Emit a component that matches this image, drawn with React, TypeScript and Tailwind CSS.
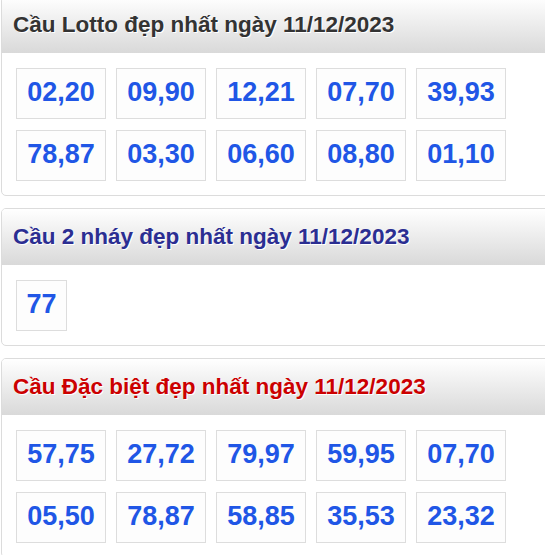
import React from "react";

const panels = [
  {
    title: "Cầu Lotto đẹp nhất ngày 11/12/2023",
    color: "text-[#333333]",
    items: ["02,20", "09,90", "12,21", "07,70", "39,93", "78,87", "03,30", "06,60", "08,80", "01,10"],
    wide: true,
  },
  {
    title: "Cầu 2 nháy đẹp nhất ngày 11/12/2023",
    color: "text-[#2b2e92]",
    items: ["77"],
    wide: false,
  },
  {
    title: "Cầu Đặc biệt đẹp nhất ngày 11/12/2023",
    color: "text-[#cc0000]",
    items: ["57,75", "27,72", "79,97", "59,95", "07,70", "05,50", "78,87", "58,85", "35,53", "23,32"],
    wide: true,
  },
];

export default function App() {
  return (
    <div className="w-[545px] h-[555px] overflow-hidden bg-white font-['Liberation_Sans',Arial,sans-serif]">
      <div className="w-[580px] pl-px -mt-1 flex flex-col gap-[12px]">
        {panels.map((p, i) => (
          <div key={i} className="border border-[#dcdcdc] rounded-[5px] overflow-hidden bg-white">
            <div className="h-[56px] flex items-center pl-[11px] bg-gradient-to-b from-[#ffffff] to-[#d9d9d9]">
              <span className={`text-[22.5px] font-bold leading-none ${p.color} [text-shadow:1px_1px_0_#ffffff]`}>
                {p.title}
              </span>
            </div>
            <div className="pl-[14px] pt-[15px] pb-[14px] flex flex-wrap w-[520px] gap-x-[10px] gap-y-[11px]">
              {p.items.map((n, j) => (
                <div
                  key={j}
                  className={`${p.wide ? "w-[90px]" : "w-[51px]"} h-[51px] pb-[2px] border border-[#dddddd] bg-[#fdfdfd] flex items-center justify-center text-[27px] font-bold text-[#2056e6] leading-none`}
                >
                  {n}
                </div>
              ))}
            </div>
          </div>
        ))}
      </div>
    </div>
  );
}
